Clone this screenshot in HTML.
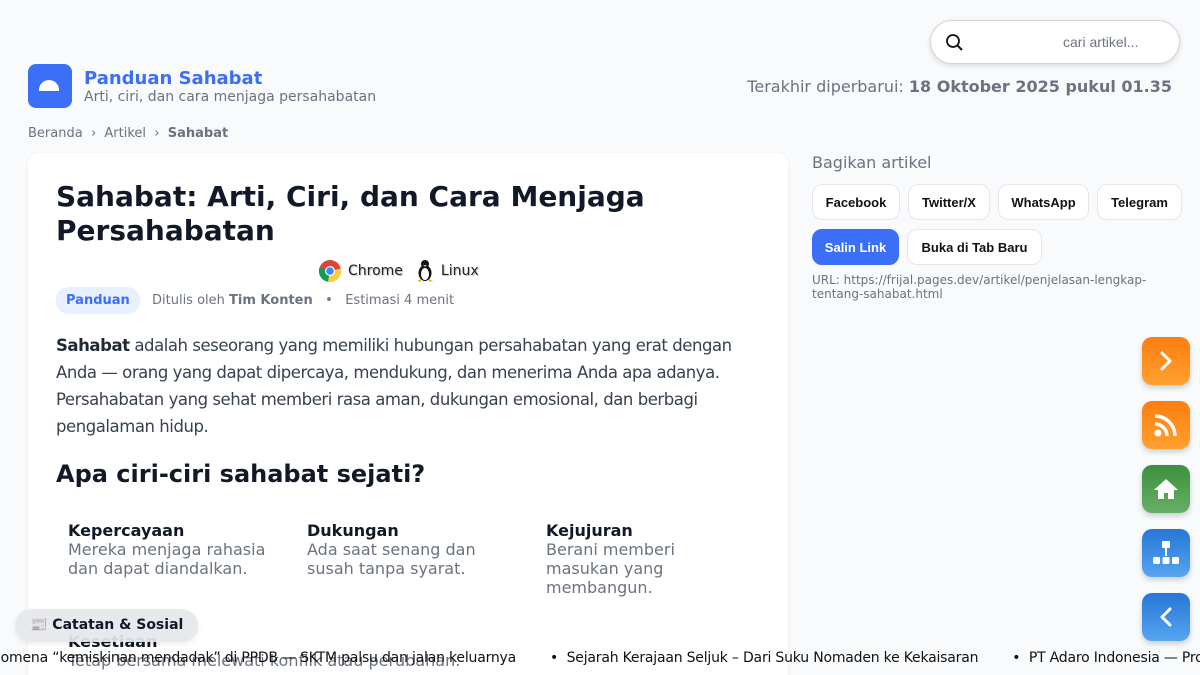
<!DOCTYPE html>
<html><head><meta charset="utf-8"><style>
*{box-sizing:border-box;margin:0;padding:0}
html,body{width:1200px;height:675px;overflow:hidden}
body{background:#f8fafc;font-family:"DejaVu Sans","Liberation Sans",sans-serif;position:relative;color:#111827}
.abs{position:absolute}
.search{left:930px;top:20px;width:250px;height:44px;background:#fff;border:1px solid #d1d5db;border-radius:22px;box-shadow:0 2px 6px rgba(0,0,0,.12)}
.search span{position:absolute;left:132px;top:13px;font:14px "Liberation Sans",sans-serif;color:#6b7280}
.logo{left:28px;top:64px;width:44px;height:44px;background:#3b6ff5;border-radius:8px}
.logo i{position:absolute;left:11px;top:16px;width:20px;height:11px;background:#fff;border-radius:10px 10px 0 0}
.btn{position:absolute;height:36px;background:#fff;border:1px solid #e5e7eb;border-radius:10px;font:bold 13px "Liberation Sans",sans-serif;color:#111;display:flex;align-items:center;justify-content:center}
.fb{position:absolute;left:1142px;width:48px;height:48px;border-radius:10px;box-shadow:0 3px 6px rgba(0,0,0,.18);display:flex;align-items:center;justify-content:center}
.or{background:linear-gradient(#fb7d0f,#ffa12f)}
.gr{background:linear-gradient(#3d8f3f,#66b065)}
.bl{background:linear-gradient(#2775d6,#56a6ee)}
.card{left:28px;top:153px;width:760px;height:540px;background:#fff;border-radius:12px;box-shadow:0 1px 4px rgba(0,0,0,.06)}
.p{font-size:16.5px;line-height:27px;color:#374151;letter-spacing:-0.45px}
.ct{font-weight:bold;font-size:16px;color:#111827}
.cd{font-size:16px;color:#6b7280;line-height:19px}
</style></head><body>
<div class="abs search"><svg class="abs" style="left:14px;top:12px" width="20" height="20" viewBox="0 0 20 20"><circle cx="8" cy="8" r="6" fill="none" stroke="#111" stroke-width="1.8"/><path d="M12.5 12.5L17 17" stroke="#111" stroke-width="2"/></svg><span>cari artikel...</span></div>
<div class="abs logo"><i></i></div>
<div class="abs" style="left:84px;top:68px;font-weight:bold;font-size:18px;color:#3b6ff5">Panduan Sahabat</div>
<div class="abs" style="left:84px;top:89px;font-size:14px;color:#6b7280">Arti, ciri, dan cara menjaga persahabatan</div>
<div class="abs" style="right:28px;top:77px;font-size:16px;color:#6b7280">Terakhir diperbarui: <b>18 Oktober 2025 pukul 01.35</b></div>
<div class="abs" style="left:28px;top:126px;font-size:13px;color:#6b7280">Beranda&nbsp; › &nbsp;Artikel&nbsp; › &nbsp;<b>Sahabat</b></div>
<div class="abs card">
<div class="abs" style="left:28px;top:27px;font-weight:bold;font-size:28px;line-height:34px;color:#111827">Sahabat: Arti, Ciri, dan Cara Menjaga<br>Persahabatan</div>
<div class="abs" style="left:290px;top:106px;font-size:14px;color:#222;display:flex;align-items:center;text-shadow:1px 1px 1px #bbb">
<svg width="24" height="24" viewBox="0 0 24 24"><circle cx="12" cy="12" r="11" fill="#db4437"/><path d="M12 12L1.5 8.5A11 11 0 0 0 10 22.8Z" fill="#0f9d58"/><path d="M12 12L10 22.8A11 11 0 0 0 22.8 9.5Z" fill="#ffcd40"/><circle cx="12" cy="12" r="5" fill="#fff"/><circle cx="12" cy="12" r="3.8" fill="#4285f4"/></svg>
<span style="margin:0 12px 0 6px">Chrome</span>
<svg width="20" height="24" viewBox="0 0 20 24"><ellipse cx="10" cy="14" rx="6.5" ry="8" fill="#111"/><ellipse cx="10" cy="15" rx="4" ry="6" fill="#fff"/><circle cx="10" cy="5" r="4" fill="#111"/><path d="M2 22l4-2 0 3zM18 22l-4-2 0 3z" fill="#f5b400"/><path d="M8 6h4l-2 2z" fill="#f5b400"/></svg>
<span style="margin-left:6px">Linux</span></div>
<div class="abs" style="left:28px;top:134px;height:27px;padding:0 10px;background:#e8efff;border-radius:13px;font-weight:bold;font-size:13px;color:#3b6ff5;line-height:27px">Panduan</div>
<div class="abs" style="left:124px;top:140px;font-size:13px;color:#6b7280">Ditulis oleh <b>Tim Konten</b> &nbsp;&nbsp;•&nbsp;&nbsp; Estimasi 4 menit</div>
<div class="abs p" style="left:28px;top:179px;width:715px"><b style="color:#1f2937">Sahabat</b> adalah seseorang yang memiliki hubungan persahabatan yang erat dengan Anda — orang yang dapat dipercaya, mendukung, dan menerima Anda apa adanya. Persahabatan yang sehat memberi rasa aman, dukungan emosional, dan berbagi pengalaman hidup.</div>
<div class="abs" style="left:28px;top:307px;font-weight:bold;font-size:24px;color:#111827">Apa ciri-ciri sahabat sejati?</div>
<div class="abs" style="left:40px;top:368px;width:200px"><div class="ct">Kepercayaan</div><div class="cd">Mereka menjaga rahasia dan dapat diandalkan.</div></div>
<div class="abs" style="left:279px;top:368px;width:200px"><div class="ct">Dukungan</div><div class="cd">Ada saat senang dan susah tanpa syarat.</div></div>
<div class="abs" style="left:518px;top:368px;width:170px"><div class="ct">Kejujuran</div><div class="cd">Berani memberi masukan yang membangun.</div></div>
<div class="abs" style="left:40px;top:479px;width:500px"><div class="ct">Kesetiaan</div><div class="cd">Tetap bersama melewati konflik atau perubahan.</div></div>
</div>
<div class="abs" style="left:812px;top:153px;font-size:16px;color:#6b7280">Bagikan artikel</div>
<div class="btn" style="left:812px;top:184px;width:88px">Facebook</div>
<div class="btn" style="left:908px;top:184px;width:82px">Twitter/X</div>
<div class="btn" style="left:998px;top:184px;width:91px">WhatsApp</div>
<div class="btn" style="left:1097px;top:184px;width:85px">Telegram</div>
<div class="btn" style="left:812px;top:229px;width:87px;background:#3b6ff5;border-color:#3b6ff5;color:#fff">Salin Link</div>
<div class="btn" style="left:907px;top:229px;width:135px">Buka di Tab Baru</div>
<div class="abs" style="left:812px;top:273px;width:370px;font-size:12px;line-height:14px;color:#6b7280">URL: https://frijal.pages.dev/artikel/penjelasan-lengkap-tentang-sahabat.html</div>
<div class="fb or" style="top:337px"><svg width="24" height="24" viewBox="0 0 24 24"><path d="M8 4l8 8-8 8" fill="none" stroke="#fff" stroke-width="3" stroke-linecap="round" stroke-linejoin="round"/></svg></div>
<div class="fb or" style="top:401px"><svg width="28" height="28" viewBox="0 0 28 28"><circle cx="6" cy="22" r="3.5" fill="#fff"/><path d="M3 13a12 12 0 0 1 12 12M3 5a20 20 0 0 1 20 20" fill="none" stroke="#fff" stroke-width="3.5"/></svg></div>
<div class="fb gr" style="top:465px"><svg width="26" height="24" viewBox="0 0 26 24"><path d="M13 2L1 13h4v9h6v-6h4v6h6v-9h4z" fill="#fff"/></svg></div>
<div class="fb bl" style="top:529px"><svg width="32" height="28" viewBox="0 0 32 28"><rect x="12" y="2" width="8" height="7" rx="1" fill="#fff"/><rect x="15" y="9" width="2" height="8" fill="#fff"/><rect x="3" y="18" width="7" height="7" rx="1.5" fill="#fff"/><rect x="12.5" y="18" width="7" height="7" rx="1.5" fill="#fff"/><rect x="22" y="18" width="7" height="7" rx="1.5" fill="#fff"/></svg></div>
<div class="fb bl" style="top:593px"><svg width="24" height="24" viewBox="0 0 24 24"><path d="M16 4l-8 8 8 8" fill="none" stroke="#fff" stroke-width="3" stroke-linecap="round" stroke-linejoin="round"/></svg></div>
<div class="abs" style="left:15px;top:609px;width:183px;height:33px;background:rgba(229,231,235,.92);border-radius:17px;font-weight:bold;font-size:14px;line-height:33px;padding-left:15px;box-shadow:0 2px 6px rgba(0,0,0,.08)">📰 Catatan &amp; Sosial</div>
<div class="abs" style="left:-8px;top:650px;white-space:nowrap;font-size:14px;letter-spacing:-0.2px;color:#111">nomena “kemiskinan mendadak” di PPDB — SKTM palsu dan jalan keluarnya<span style="display:inline-block;width:34px"></span>•&nbsp; Sejarah Kerajaan Seljuk – Dari Suku Nomaden ke Kekaisaran<span style="display:inline-block;width:34px"></span>•&nbsp; PT Adaro Indonesia — Profil</div>
</body></html>
